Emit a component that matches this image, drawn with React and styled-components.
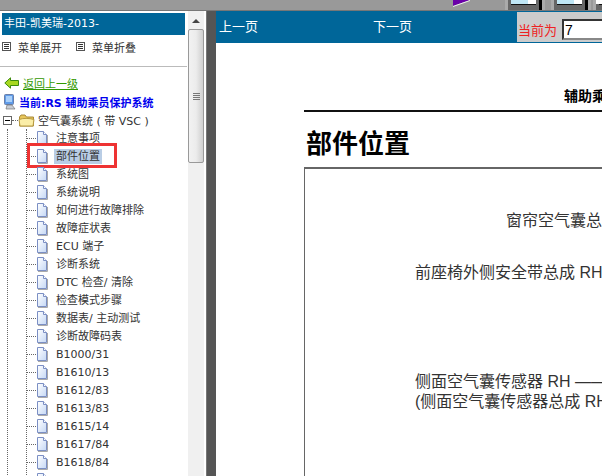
import React from "react";
import styled, { createGlobalStyle } from "styled-components";

const cjkFont = `"DejaVu Sans", "Noto Sans CJK SC", sans-serif`;
const docFont = `"Liberation Sans", "Noto Sans CJK SC", sans-serif`;

const chapters = [
  "注意事项",
  "部件位置",
  "系统图",
  "系统说明",
  "如何进行故障排除",
  "故障症状表",
  "ECU 端子",
  "诊断系统",
  "DTC 检查/ 清除",
  "检查模式步骤",
  "数据表/ 主动测试",
  "诊断故障码表",
  "B1000/31",
  "B1610/13",
  "B1612/83",
  "B1613/83",
  "B1615/14",
  "B1617/84",
  "B1618/84",
  "B1619/84",
];

const GlobalStyle = createGlobalStyle`
  html, body {
    margin: 0;
    padding: 0;
    background: #fff;
  }
`;

const Page = styled.div`
  width: 602px;
  height: 476px;
  overflow: hidden;
  display: flex;
  flex-direction: column;
  font-family: ${cjkFont};
`;

const TopStrip = styled.div`
  height: 10px;
  flex: none;
  background: #999;
  border-bottom: 1px solid #777;
  display: flex;
  align-items: flex-start;
  overflow: hidden;
`;

const Pennant = styled.svg`
  margin-left: 453px;
  flex: none;
`;

const WindowBtn = styled.svg`
  flex: none;
  margin-left: ${(p) => p.$gap}px;
`;

const Body = styled.div`
  flex: 1;
  min-height: 0;
  display: flex;
`;

const Side = styled.div`
  width: 188px;
  flex: none;
  overflow: hidden;
  background: #fff;
  padding-top: 2px;
  box-sizing: border-box;
`;

const SideTitle = styled.div`
  margin-left: 2px;
  width: 183px;
  height: 22px;
  background: #006699;
  color: #fff;
  font-size: 11px;
  line-height: 22px;
  padding-left: 2px;
  box-sizing: border-box;
`;

const MenuBar = styled.div`
  height: 32px;
  display: flex;
  align-items: center;
  padding: 0 0 8px 2px;
  margin-right: 1px;
  border-bottom: 1px solid #bbb;
  box-sizing: border-box;
  font-size: 11px;
  color: #333;
`;

const MenuItem = styled.div`
  display: flex;
  align-items: center;
  width: 74px;
  gap: 7px;
`;

const BackRow = styled.div`
  display: flex;
  align-items: center;
  height: 18px;
  margin-top: 7px;
  padding-left: 4px;
  gap: 4px;
  font-size: 11px;
`;

const BackLink = styled.a`
  color: #339900;
  text-decoration: underline;
`;

const CurrentRow = styled.div`
  display: flex;
  align-items: center;
  height: 19px;
  padding-left: 3px;
  gap: 3px;
  font-size: 11px;
  font-weight: bold;
  color: #0000ee;
  white-space: nowrap;
`;

const RootRow = styled.div`
  display: flex;
  align-items: center;
  height: 18px;
  padding-left: 3px;
  font-size: 11px;
  color: #333;
  white-space: nowrap;
`;

const RootConnector = styled.span`
  width: 6px;
  border-top: 1px dotted #666;
`;

const RootLabel = styled.span`
  margin-left: 3px;
`;

const Tree = styled.div`
  margin-left: 7px;
  border-left: 1px dotted #666;
`;

const Branch = styled.div`
  margin-left: 18px;
  border-left: 1px dotted #666;
`;

const Leaf = styled.div`
  position: relative;
  display: flex;
  align-items: center;
  height: 18px;
  font-size: 11px;
  color: #333;
  white-space: nowrap;
`;

const LeafConnector = styled.span`
  width: 9px;
  flex: none;
  border-top: 1px dotted #666;
`;

const LeafLabel = styled.span`
  margin-left: 6px;
  padding: 0 2px;
  line-height: 15px;
  background: ${(p) => (p.$selected ? "#b9cde5" : "transparent")};
`;

const Callout = styled.span`
  position: absolute;
  left: 0;
  top: -4px;
  width: 90px;
  height: 25px;
  border: 3px solid #ee3333;
  box-sizing: border-box;
`;

const ScrollTrack = styled.div`
  width: 16px;
  flex: none;
  background: #f0f0f0;
  display: flex;
  flex-direction: column;
  align-items: center;
`;

const ScrollArrow = styled.span`
  margin-top: 8px;
  width: 0;
  height: 0;
  border-left: 4px solid transparent;
  border-right: 4px solid transparent;
  border-bottom: 4px solid #444;
`;

const ScrollThumb = styled.div`
  margin-top: 6px;
  width: 16px;
  height: 134px;
  box-sizing: border-box;
  border: 1px solid #999;
  border-radius: 2px;
  background: linear-gradient(to right, #f2f2f2, #ececec 50%, #cfcfcf);
  display: flex;
  flex-direction: column;
  justify-content: center;
  align-items: center;
  gap: 1px;
`;

const Grip = styled.span`
  width: 7px;
  height: 1px;
  background: #777;
`;

const Gutter = styled.div`
  width: 2px;
  flex: none;
  background: #fff;
`;

const Splitter = styled.div`
  width: 10px;
  flex: none;
  background: #555;
  border-left: 1px solid #777;
  box-sizing: border-box;
`;

const Main = styled.div`
  flex: 1;
  min-width: 0;
  overflow: hidden;
  background: #fff;
  display: flex;
  flex-direction: column;
`;

const PagerBar = styled.div`
  height: 32px;
  flex: none;
  background: #006699;
  display: flex;
`;

const PagerLink = styled.div`
  width: ${(p) => p.$width}px;
  flex: none;
  padding: 8px 0 0 3px;
  box-sizing: border-box;
  color: #fff;
  font-size: 13px;
  line-height: 16px;
  font-family: ${docFont};
`;

const PageBox = styled.div`
  flex: 1;
  min-width: 0;
  overflow: hidden;
  margin: 1px 0;
  background: #ccc;
  display: flex;
  align-items: center;
  padding-left: 1px;
  gap: 5px;
  font-family: ${docFont};
`;

const PageCaption = styled.span`
  flex: none;
  color: #ee2222;
  font-size: 13px;
  margin-top: 5px;
  white-space: nowrap;
`;

const PageInput = styled.input`
  width: 60px;
  height: 21px;
  box-sizing: border-box;
  flex: none;
  margin: 5px 0 0;
  padding: 0 1px;
  border: 2px inset #888;
  background: #fff;
  font-size: 14px;
  font-family: ${docFont};
  color: #000;
`;

const Sheet = styled.div`
  padding: 44px 0 0 88px;
  font-family: ${docFont};
  color: #000;
`;

const RunningHead = styled.div`
  margin-left: 260px;
  font-size: 14px;
  font-weight: bold;
  line-height: 18px;
  white-space: nowrap;
`;

const Rule = styled.div`
  margin-top: 5px;
  width: 400px;
  height: 2px;
  background: #111;
`;

const Heading = styled.h1`
  margin: 17px 0 0 2px;
  font-size: 26px;
  font-weight: bold;
  line-height: 31px;
  font-family: ${docFont};
`;

const Figure = styled.div`
  margin-top: 7px;
  width: 420px;
  height: 340px;
  box-sizing: border-box;
  border: 1px solid #666;
  border-top-width: 2px;
  border-right: none;
`;

const FigureLabel = styled.div`
  margin-left: ${(p) => p.$indent}px;
  margin-top: ${(p) => p.$gap}px;
  font-size: 16px;
  line-height: 20px;
  color: #333;
  white-space: nowrap;
`;

const DocIcon = () => (
  <svg width="12" height="15" viewBox="0 0 12 15" style={{ flex: "none" }}>
    <defs>
      <linearGradient id="docFill" x1="0" y1="0" x2="1" y2="1">
        <stop offset="0" stopColor="#ffffff" />
        <stop offset="1" stopColor="#c5d8f5" />
      </linearGradient>
    </defs>
    <path d="M1.5.5H7.5L10.5 3.5V13.5H1.5Z" fill="url(#docFill)" stroke="#7b8fc4" />
    <path d="M7.5.5V3.5H10.5" fill="#fff" stroke="#7b8fc4" />
    <path d="M2 14.5H11.5V4" fill="none" stroke="#aaa" />
  </svg>
);

const MenuIcon = () => (
  <svg width="9" height="9" viewBox="0 0 9 9" style={{ flex: "none" }}>
    <rect x=".5" y=".5" width="8" height="8" fill="#fff" stroke="#555" />
    <path d="M2 2.5H7M2 4.5H7M2 6.5H7" stroke="#333" />
  </svg>
);

const BackIcon = () => (
  <svg width="15" height="12" viewBox="0 0 15 12" style={{ flex: "none" }}>
    <path
      d="M.8 6 6.5.8V3.5H14.5V8.5H6.5V11.2Z"
      fill="#a8d820"
      stroke="#3c8a10"
      strokeLinejoin="round"
    />
  </svg>
);

const ComputerIcon = () => (
  <svg width="13" height="16" viewBox="0 0 13 16" style={{ flex: "none" }}>
    <rect x="1.5" y=".5" width="9" height="10" rx="1" fill="#5f9be8" stroke="#6a7fa8" />
    <rect x="3" y="2" width="6" height="6" fill="#a9d0fa" />
    <path d="M4 11H9L12 15H3Z" fill="#c8ccd4" stroke="#777" strokeWidth=".7" />
  </svg>
);

const MinusBox = () => (
  <svg width="9" height="9" viewBox="0 0 9 9" style={{ flex: "none" }}>
    <rect x=".5" y=".5" width="8" height="8" fill="#fff" stroke="#666" />
    <path d="M2 4.5H7" stroke="#000" />
  </svg>
);

const FolderIcon = () => (
  <svg width="17" height="13" viewBox="0 0 17 13" style={{ flex: "none" }}>
    <path d="M1.5 3 3 1H7L8.5 3H15.5V12H1.5Z" fill="#e8c65a" stroke="#a8893a" />
    <path d="M1 5.5C5 4 11 4 16 5.5L15 12H2Z" fill="#fbeea8" stroke="#b89a40" />
  </svg>
);

const WindowIcon = ({ gap, width }) => (
  <WindowBtn $gap={gap} width={width} height="10" viewBox={`0 0 ${width} 10`}>
    <rect width={width} height="10" fill="#aaa" />
    <rect x="3" width={width - 6} height="10" fill="#666" />
    <rect x={width - 6} width="3" height="10" fill="#000" />
    <rect x="6" width={width - 23} height="4" fill="#bfe6f5" />
    <rect x={width - 17} width="8" height="4" fill="#fff" />
    <rect x="6" y="4" width={width - 15} height="1" fill="#111" />
  </WindowBtn>
);

export default function App() {
  return (
    <Page>
      <GlobalStyle />
      <TopStrip>
        <Pennant width="18" height="7" viewBox="0 0 18 7">
          <path d="M0 0H17L0 6Z" fill="#6a00a8" />
          <path d="M0 6.5 17 .5" stroke="#eee" />
        </Pennant>
        <WindowIcon gap={34} width={40} />
        <WindowIcon gap={6} width={40} />
        <WindowIcon gap={2} width={20} />
      </TopStrip>
      <Body>
        <Side>
          <SideTitle>丰田-凯美瑞-2013-</SideTitle>
          <MenuBar>
            <MenuItem>
              <MenuIcon />
              菜单展开
            </MenuItem>
            <MenuItem>
              <MenuIcon />
              菜单折叠
            </MenuItem>
          </MenuBar>
          <BackRow>
            <BackIcon />
            <BackLink>返回上一级</BackLink>
          </BackRow>
          <CurrentRow>
            <ComputerIcon />
            当前:RS 辅助乘员保护系统
          </CurrentRow>
          <RootRow>
            <MinusBox />
            <RootConnector />
            <FolderIcon />
            <RootLabel>空气囊系统 ( 带 VSC )</RootLabel>
          </RootRow>
          <Tree>
            <Branch>
              {chapters.map((name) => (
                <Leaf key={name}>
                  <LeafConnector />
                  <DocIcon />
                  <LeafLabel $selected={name === "部件位置"}>{name}</LeafLabel>
                  {name === "部件位置" && <Callout />}
                </Leaf>
              ))}
            </Branch>
          </Tree>
        </Side>
        <ScrollTrack>
          <ScrollArrow />
          <ScrollThumb>
            <Grip />
            <Grip />
            <Grip />
            <Grip />
          </ScrollThumb>
        </ScrollTrack>
        <Gutter />
        <Splitter />
        <Main>
          <PagerBar>
            <PagerLink $width={154}>上一页</PagerLink>
            <PagerLink $width={147}>下一页</PagerLink>
            <PageBox>
              <PageCaption>当前为</PageCaption>
              <PageInput defaultValue="7" readOnly />
            </PageBox>
          </PagerBar>
          <Sheet>
            <RunningHead>辅助乘员保护系统</RunningHead>
            <Rule />
            <Heading>部件位置</Heading>
            <Figure>
              <FigureLabel $indent={201} $gap={42}>
                窗帘空气囊总成
              </FigureLabel>
              <FigureLabel $indent={110} $gap={32}>
                前座椅外侧安全带总成 RH
              </FigureLabel>
              <FigureLabel $indent={110} $gap={89}>
                侧面空气囊传感器 RH ——
              </FigureLabel>
              <FigureLabel $indent={110} $gap={0}>
                (侧面空气囊传感器总成 RH)
              </FigureLabel>
            </Figure>
          </Sheet>
        </Main>
      </Body>
    </Page>
  );
}
